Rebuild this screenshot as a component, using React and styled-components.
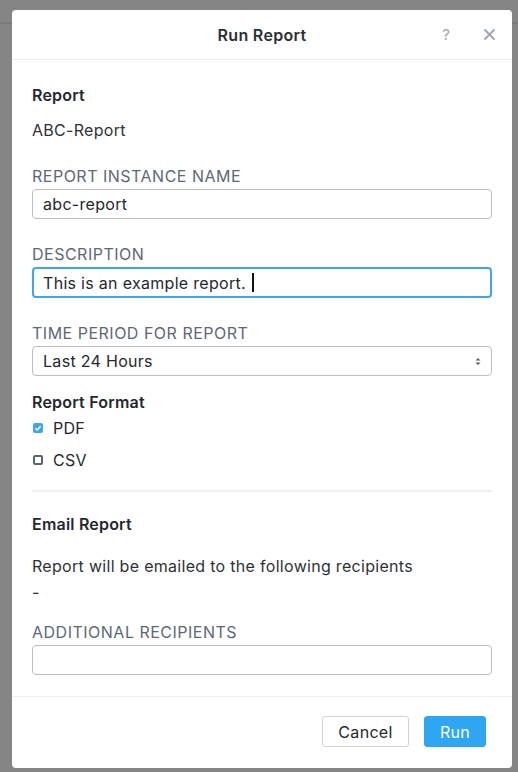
import React, { useState } from "react";
import styled, { createGlobalStyle } from "styled-components";

const GlobalStyle = createGlobalStyle`
  html, body {
    margin: 0;
    padding: 0;
    height: 100%;
  }
  body {
    background: #858585;
    font-family: "Inter", "Open Sans", sans-serif;
    color: #2b2f36;
  }
`;

const Backdrop = styled.div`
  min-height: 772px;
  padding: 10px 6px 4px 12px;
  box-sizing: border-box;
  background: linear-gradient(#858585 0 22px, #7b7b7d 22px 24px, #858585 24px);
`;

const Modal = styled.div`
  width: 500px;
  background: #fff;
  border-radius: 4px;
  display: flex;
  flex-direction: column;
`;

const Header = styled.div`
  height: 49px;
  border-bottom: 1px solid #eceef1;
  display: flex;
  align-items: center;
  justify-content: center;
  position: relative;
`;

const Title = styled.div`
  font-size: 16px;
  font-weight: 600;
  color: #2b2f36;
  letter-spacing: 0.3px;
`;

const HeaderIcons = styled.div`
  position: absolute;
  right: 17px;
  top: 0;
  bottom: 0;
  display: flex;
  align-items: center;
  gap: 34px;
  color: #9aa4b3;
  font-size: 15px;
`;

const Body = styled.div`
  padding: 25px 20px 21px;
  display: flex;
  flex-direction: column;
`;

const SectionTitle = styled.div`
  font-size: 16px;
  font-weight: 600;
  line-height: 20px;
  color: #24282e;
  letter-spacing: 0.2px;
  margin-top: ${(p) => p.$mt || 0}px;
`;

const Text = styled.div`
  font-size: 16px;
  line-height: 20px;
  color: #2e3237;
  letter-spacing: 0.3px;
  margin-top: ${(p) => p.$mt || 0}px;
`;

const Label = styled.label`
  display: block;
  font-size: 16px;
  line-height: 20px;
  color: #5d6877;
  letter-spacing: 0.5px;
  text-transform: uppercase;
  margin-top: ${(p) => p.$mt || 25}px;
  margin-bottom: 3px;
`;

const Input = styled.input`
  box-sizing: border-box;
  width: 100%;
  height: 30px;
  border: 1px solid #b9bfc9;
  border-radius: 4px;
  padding: 0 10px;
  font-family: inherit;
  font-size: 16px;
  letter-spacing: 0.3px;
  color: #24282e;
  outline: none;
`;

const FocusField = styled.div`
  box-sizing: border-box;
  height: 31px;
  border: 2px solid #3ea6ef;
  border-radius: 4px;
  padding: 0 9px;
  display: flex;
  align-items: center;
  font-size: 16px;
  letter-spacing: 0.3px;
  color: #24282e;
  white-space: pre;
`;

const Caret = styled.span`
  display: inline-block;
  width: 2px;
  height: 19px;
  background: #111;
  margin-left: 1px;
`;

const SelectBox = styled.div`
  box-sizing: border-box;
  height: 30px;
  border: 1px solid #b9bfc9;
  border-radius: 4px;
  padding: 0 10px;
  display: flex;
  align-items: center;
  justify-content: space-between;
  font-size: 16px;
  letter-spacing: 0.3px;
  color: #24282e;
`;

const CheckRow = styled.label`
  display: flex;
  align-items: center;
  gap: 10px;
  font-size: 16px;
  letter-spacing: 0.3px;
  line-height: 20px;
  color: #24282e;
  margin-top: ${(p) => p.$mt || 0}px;
  padding-left: 1px;
`;

const Box = styled.span`
  width: 10px;
  height: 10px;
  box-sizing: border-box;
  border-radius: 2px;
  border: ${(p) => (p.$checked ? "none" : "2px solid #5b6472")};
  background: ${(p) => (p.$checked ? "#3ea6ef" : "#fff")};
  display: inline-flex;
  align-items: center;
  justify-content: center;
`;

const Divider = styled.hr`
  border: none;
  border-top: 2px solid #eef0f2;
  margin: 20px 0 22px;
`;

const Footer = styled.div`
  border-top: 1px solid #eceef1;
  padding: 19px 26px 21px;
  display: flex;
  justify-content: flex-end;
  gap: 15px;
`;

const Button = styled.button`
  height: 31px;
  width: ${(p) => (p.$primary ? 62 : 87)}px;
  padding: 0;
  border-radius: 3px;
  font-family: inherit;
  font-size: 16px;
  letter-spacing: 0.3px;
  cursor: pointer;
  border: ${(p) => (p.$primary ? "1px solid #2ea6f2" : "1px solid #cfd4da")};
  background: ${(p) => (p.$primary ? "#2ea6f2" : "#fff")};
  color: ${(p) => (p.$primary ? "#fff" : "#24282e")};
`;

export default function App() {
  const [name, setName] = useState("abc-report");
  const [pdf, setPdf] = useState(true);
  const [csv, setCsv] = useState(false);

  return (
    <>
      <GlobalStyle />
      <Backdrop>
        <Modal>
          <Header>
            <Title>Run Report</Title>
            <HeaderIcons>
              <span>?</span>
              <svg width="11" height="11" viewBox="0 0 11 11">
                <path d="M1 1 L10 10 M10 1 L1 10" stroke="#9aa4b3" strokeWidth="1.8" strokeLinecap="round" />
              </svg>
            </HeaderIcons>
          </Header>

          <Body>
            <SectionTitle>Report</SectionTitle>
            <Text $mt={15}>ABC-Report</Text>

            <Label $mt={26}>Report Instance Name</Label>
            <Input value={name} onChange={(e) => setName(e.target.value)} />

            <Label>Description</Label>
            <FocusField>
              This is an example report. <Caret />
            </FocusField>

            <Label>Time Period for Report</Label>
            <SelectBox>
              <span>Last 24 Hours</span>
              <svg width="6" height="9" viewBox="0 0 6 9">
                <path d="M0.5 3.5 L3 1 L5.5 3.5 Z M0.5 5.5 L3 8 L5.5 5.5 Z" fill="#555c66" />
              </svg>
            </SelectBox>

            <SectionTitle $mt={16}>Report Format</SectionTitle>
            <CheckRow $mt={6} onClick={() => setPdf(!pdf)}>
              <Box $checked={pdf}>
                {pdf && (
                  <svg width="8" height="8" viewBox="0 0 8 8">
                    <path d="M1.5 4.2 L3.3 6 L6.6 2.2" stroke="#fff" strokeWidth="1.5" fill="none" />
                  </svg>
                )}
              </Box>
              PDF
            </CheckRow>
            <CheckRow $mt={12} onClick={() => setCsv(!csv)}>
              <Box $checked={csv} />
              CSV
            </CheckRow>

            <Divider />

            <SectionTitle>Email Report</SectionTitle>
            <Text $mt={22}>Report will be emailed to the following recipients</Text>
            <Text $mt={6}>-</Text>

            <Label $mt={20}>Additional Recipients</Label>
            <Input />
          </Body>

          <Footer>
            <Button>Cancel</Button>
            <Button $primary>Run</Button>
          </Footer>
        </Modal>
      </Backdrop>
    </>
  );
}
